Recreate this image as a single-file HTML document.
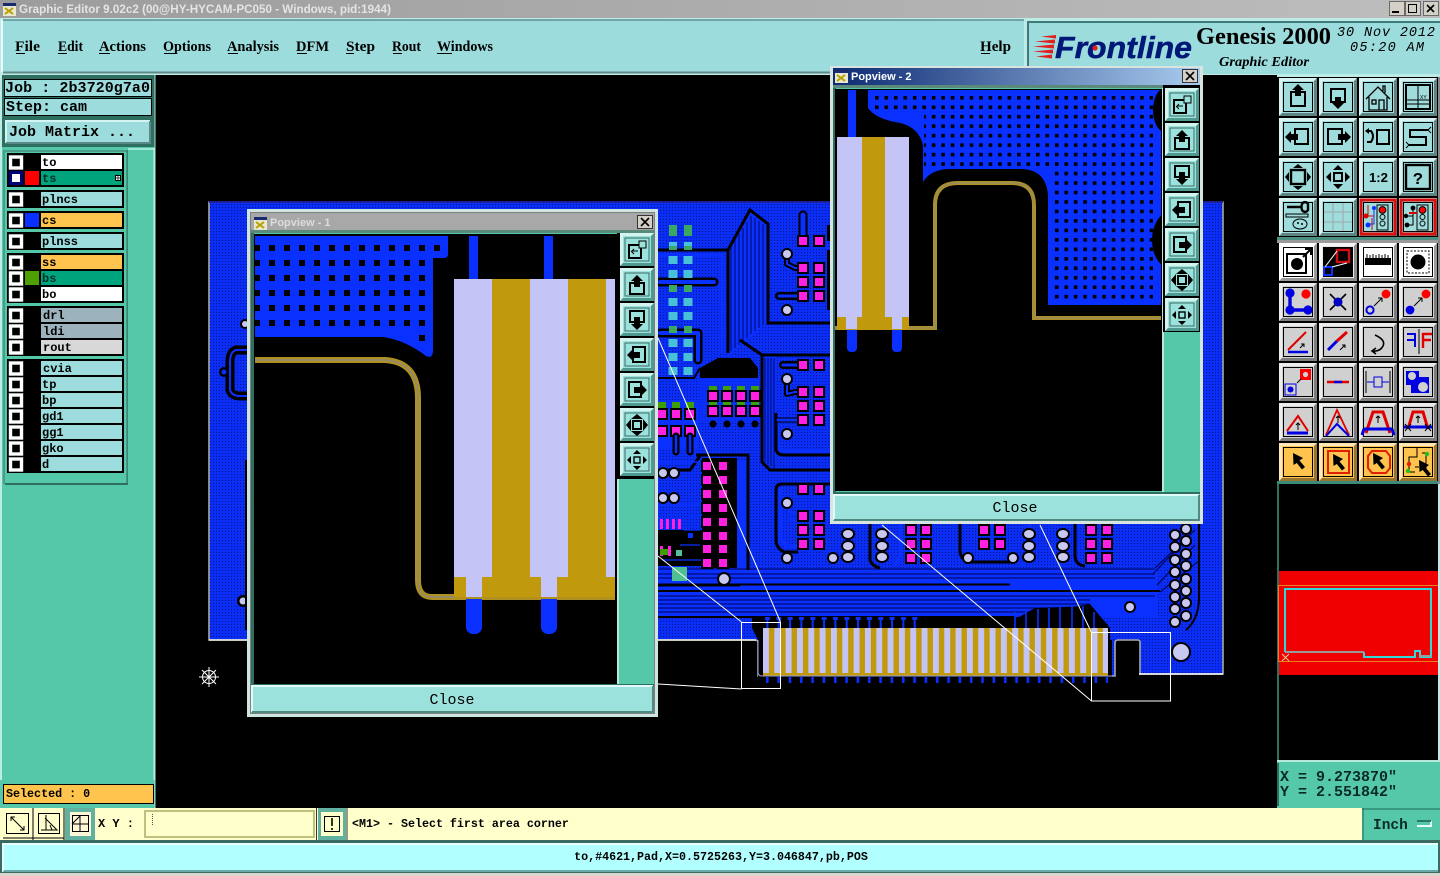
<!DOCTYPE html>
<html><head><meta charset="utf-8"><title>Graphic Editor</title>
<style>
html,body{margin:0;padding:0;background:#000;width:1440px;height:876px;overflow:hidden}
svg{display:block;position:absolute;left:0;top:0}
.mo{font-family:"Liberation Mono",monospace;font-weight:700}
.mn{font-family:"Liberation Mono",monospace}
.se{font-family:"Liberation Serif",serif;font-weight:700}
.sa{font-family:"Liberation Sans",sans-serif}
.ly{font-family:"Liberation Mono",monospace;font-weight:700;font-size:12px;fill:#000}
.k{fill:none;stroke:#000;stroke-linecap:round;stroke-linejoin:round}
.u{fill:none;stroke:#0a30ff;stroke-linecap:round;stroke-linejoin:round}
.dk{fill:none;stroke:#04107a;stroke-width:1.2}
.ic{fill:none;stroke:#000;stroke-width:2}
</style></head><body>
<svg width="1440" height="876" viewBox="0 0 1440 876" xmlns="http://www.w3.org/2000/svg">
<defs>
<pattern id="dots" width="3" height="3" patternUnits="userSpaceOnUse"><rect width="3" height="3" fill="#0b2ef6"/><rect width="1" height="1" fill="#061690"/></pattern>
<pattern id="pd1" x="249.5" y="240.5" width="15" height="15" patternUnits="userSpaceOnUse"><rect x="4.5" y="4.5" width="6" height="6" fill="#000"/></pattern>
<pattern id="pd2" x="872" y="93" width="9.47" height="9.47" patternUnits="userSpaceOnUse"><rect x="3" y="3" width="3.6" height="3.6" fill="#000"/></pattern>
<pattern id="conn" x="763" y="628" width="11.33" height="48" patternUnits="userSpaceOnUse"><rect width="11.33" height="48" fill="#c09a0c"/><rect width="5.9" height="45" fill="#c4c4f6"/></pattern>
<pattern id="fing" x="763" y="617" width="11.33" height="12" patternUnits="userSpaceOnUse"><rect x="3.4" y="3" width="2" height="9" fill="#0a30ff"/><rect x="2" y="0" width="5" height="3" fill="#0a30ff"/></pattern>
<pattern id="fing2" x="763" y="677" width="11.33" height="7" patternUnits="userSpaceOnUse"><rect x="3" y="0" width="2.6" height="6" fill="#0a30ff"/></pattern>
<linearGradient id="tb" x1="0" x2="1" y1="0" y2="0"><stop offset="0" stop-color="#9c9c9c"/><stop offset="1" stop-color="#bdbdbd"/></linearGradient>
<linearGradient id="tb2" x1="0" x2="1" y1="0" y2="0"><stop offset="0" stop-color="#0d2a72"/><stop offset="1" stop-color="#a8cbee"/></linearGradient>
<clipPath id="c1"><rect x="254" y="235" width="361" height="448"/></clipPath>
<clipPath id="c2"><rect x="835" y="90" width="326" height="400"/></clipPath>
<g id="p"><rect x="-6" y="-6" width="12" height="12" fill="#000"/><rect x="-4" y="-4" width="8" height="8" fill="#ff20e0"/></g>
<g id="v"><circle r="6" fill="#000"/><circle r="4" fill="#c8c8f0"/></g>
<g id="w"><ellipse rx="7" ry="6" fill="#000"/><ellipse rx="5" ry="4" fill="#c8c8f0"/></g>
<g id="tp"><rect x="-4.5" y="-4" width="9" height="8" fill="#48c0d8"/></g>
<!-- bevel buttons -->
<g id="bt"><rect width="38" height="38" fill="currentColor"/><path d="M0,0H38L35,3H3V35L0,38Z" fill="#fff" opacity=".6"/><path d="M38,38H0L3,35H35V3L38,0Z" fill="#000" opacity=".4"/><rect x="4.5" y="4.5" width="29" height="29" fill="none" stroke="#000"/></g>
<g id="pb"><rect width="34" height="33" fill="#9ce2dc"/><path d="M0,0H34L31,3H3V30L0,33Z" fill="#d4f4f0"/><path d="M34,33H0L3,30H31V3L34,0Z" fill="#4e9a90"/><rect x="5" y="5" width="24" height="23" fill="none" stroke="#3a6a64"/></g>
</defs>

<!-- canvas -->
<rect width="1440" height="876" fill="#000"/>

<!-- BOARD -->
<path d="M209,202H1223V674H1140V642Q1140,640 1137,640H1118Q1115,640 1115,643V676H758V643Q758,640 755,640H209Z" fill="url(#dots)" stroke="#a8a8a8" stroke-width="1.6"/>
<path d="M209,640H756" stroke="#f4f4e0" stroke-width="1.4"/>
<path d="M1139,674H1223" stroke="#fff" stroke-width="1.4"/>
<path d="M209,202H1223" stroke="#0a0a90" stroke-width="1.4"/>
<!-- left strip features -->
<path d="M247,350H236Q230,352 230,362V390Q232,396 240,396H247" fill="none" stroke="#000" stroke-width="9"/>
<path d="M247,350H236Q230,352 230,362V390Q232,396 240,396H247" fill="none" stroke="#0a30ff" stroke-width="2"/>
<circle cx="224" cy="372" r="5" fill="#000"/><circle cx="224" cy="372" r="2.5" fill="#0a30ff"/>
<circle cx="245" cy="324" r="5" fill="#000"/><circle cx="245" cy="324" r="3" fill="#c8c8f0"/>
<circle cx="243" cy="601" r="6" fill="#000"/><circle cx="243" cy="601" r="3.5" fill="#c8c8f0"/>
<rect x="245" y="460" width="3" height="170" fill="#000"/>
<!-- horizontal bundles -->
<rect x="658" y="568" width="500" height="50" fill="#0a30ff"/>
<path d="M658,569H1155M658,574H1155M658,578H1155M658,596H1155M658,600H1090M658,604H1090M658,608H1070M658,612H1050" stroke="#030a70" stroke-width="1.3"/>
<path d="M658,585H1010" stroke="#000" stroke-width="3"/>
<path d="M740,586H1010" stroke="#0a30ff" stroke-width="1"/>
<path d="M658,591H1160M658,617H1015" stroke="#000" stroke-width="2"/>
<path d="M1155,568L1195,530M1152,575L1190,535M1160,592L1200,560M1157,585L1195,545" stroke="#020a70" stroke-width="1.4"/>
<!-- connector -->
<path d="M752,618H1012L1090,604L1110,628V640H1112V680H758V640L752,628Z" fill="#000"/>
<path d="M1014,620L1035,608L1090,606L1108,625" fill="#000"/>
<path d="M1015,628V612M1026,628V610M1038,628V609M1049,628V608M1060,628V607M1072,628V606M1083,628V606M1094,628V612" stroke="#0a30ff" stroke-width="1.6"/>
<rect x="763" y="617" width="155" height="11" fill="url(#fing)"/>
<rect x="763" y="628" width="345" height="48" fill="url(#conn)"/>
<rect x="763" y="673" width="345" height="3" fill="#c09a0c"/>
<path d="M758,640V672Q758,676 762,676H1115" fill="none" stroke="#9aa0e0" stroke-width="1"/>
<rect x="763" y="677" width="345" height="7" fill="url(#fing2)"/>

<!-- diagonal bundle A -->
<path d="M728,250L750,212L767,224V323L728,356Z" fill="#0a30ff"/>
<path d="M731,246V351M735,240V348M739,234V345M743,228V341M747,222V338M751,216V334M755,218V331M759,221V328M763,224V325" class="dk"/>
<path d="M728,250L750,210L768,224V323H830" fill="none" stroke="#000" stroke-width="3"/>
<path d="M658,250H728V353" fill="none" stroke="#000" stroke-width="3"/>
<rect x="762" y="356" width="14" height="108" fill="#0a30ff"/>
<path d="M765,358V462M768,358V464M771,358V466M774,358V468" class="dk"/>
<path d="M740,340L762,355H830M762,355V462L770,470H830" fill="none" stroke="#000" stroke-width="3"/>
<path d="M776,413V448Q776,455 784,455H830" fill="none" stroke="#000" stroke-width="3"/>
<path d="M779,413V446Q779,451 786,451H830" fill="none" stroke="#0a30ff" stroke-width="2.5"/>
<path d="M658,255H722V352" fill="none" stroke="#0a30ff" stroke-width="3"/>
<!-- bars -->
<path class="k" stroke-width="9" d="M660,282H714"/><path class="u" stroke-width="4" d="M660,282H714"/>
<path class="k" stroke-width="9" d="M660,333H698V360"/><path class="u" stroke-width="4" d="M660,333H698V360"/>
<path class="k" stroke-width="9" d="M803,215V240"/><path class="u" stroke-width="5" d="M803,215V240"/>
<path class="k" stroke-width="8" d="M779,296H802"/><path class="u" stroke-width="3" d="M779,296H802"/>
<path class="k" stroke-width="8" d="M783,365H802"/><path class="u" stroke-width="3" d="M783,365H802"/>
<path class="k" stroke-width="6" d="M787,254V264L795,268H803"/><path class="u" stroke-width="2" d="M787,254V264L795,268H803"/>
<path class="k" stroke-width="6" d="M787,385V394L795,392H803"/><path class="u" stroke-width="2" d="M787,385V394L795,392H803"/>
<path class="k" stroke-width="5" d="M778,420H803"/><path class="u" stroke-width="3" d="M778,420H803"/>
<rect x="827" y="225" width="3" height="16" fill="#000"/><rect x="827" y="250" width="3" height="60" fill="#000"/>
<!-- top IC row -->
<path d="M700,368L718,358H750L758,368V378H700Z" fill="#000"/>
<rect x="698" y="378" width="62" height="44" fill="#0a30ff" opacity=".6"/>
<path d="M658,378H694L700,368" fill="none" stroke="#000" stroke-width="2"/>
<rect x="658" y="400" width="40" height="50" fill="#0a30ff"/>
<g fill="#3ea000"><rect x="709" y="386" width="8" height="7"/><rect x="723" y="386" width="8" height="7"/><rect x="737" y="386" width="8" height="7"/><rect x="751" y="386" width="8" height="7"/><rect x="709" y="401" width="8" height="6"/><rect x="723" y="401" width="8" height="6"/><rect x="737" y="401" width="8" height="6"/><rect x="751" y="401" width="8" height="6"/><rect x="658" y="402" width="8" height="7"/><rect x="672" y="402" width="8" height="7"/><rect x="686" y="402" width="8" height="7"/></g>
<g><use href="#p" x="713" y="396"/><use href="#p" x="727" y="396"/><use href="#p" x="741" y="396"/><use href="#p" x="755" y="396"/><use href="#p" x="713" y="411"/><use href="#p" x="727" y="411"/><use href="#p" x="741" y="411"/><use href="#p" x="755" y="411"/><use href="#p" x="662" y="414"/><use href="#p" x="676" y="414"/><use href="#p" x="690" y="414"/><use href="#p" x="662" y="431"/><use href="#p" x="676" y="431"/><use href="#p" x="690" y="431"/></g>
<path d="M676,436V452M690,436V452" class="k" stroke-width="7"/><path d="M676,436V452M690,436V452" class="u" stroke-width="2.5"/>
<g fill="#000"><circle cx="713" cy="424" r="3.6"/><circle cx="727" cy="424" r="3.6"/><circle cx="741" cy="424" r="3.6"/><circle cx="755" cy="424" r="3.6"/></g>
<!-- teal column pads -->
<g fill="#3aa860"><rect x="669" y="225" width="8" height="11"/><rect x="684" y="225" width="8" height="11"/><rect x="669" y="243" width="8" height="7"/><rect x="684" y="243" width="8" height="7"/><rect x="669" y="285" width="8" height="7"/><rect x="684" y="285" width="8" height="7"/><rect x="669" y="326" width="8" height="7"/><rect x="684" y="326" width="8" height="7"/></g>
<g><use href="#tp" x="673" y="260"/><use href="#tp" x="688" y="260"/><use href="#tp" x="673" y="274"/><use href="#tp" x="688" y="274"/><use href="#tp" x="673" y="302"/><use href="#tp" x="688" y="302"/><use href="#tp" x="673" y="316"/><use href="#tp" x="688" y="316"/><use href="#tp" x="673" y="343"/><use href="#tp" x="688" y="343"/><use href="#tp" x="673" y="357"/><use href="#tp" x="688" y="357"/><use href="#tp" x="673" y="371"/><use href="#tp" x="688" y="371"/></g>
<rect x="669" y="242" width="8" height="4" fill="#48c0d8"/><rect x="684" y="242" width="8" height="4" fill="#48c0d8"/>
<!-- central block -->
<rect x="702" y="458" width="35" height="110" fill="#000"/>
<rect x="658" y="530" width="46" height="36" fill="#000"/>
<path d="M696,455H748V570" fill="none" stroke="#000" stroke-width="3"/>
<path d="M741,460V568" stroke="#0a30ff" stroke-width="8"/>
<path d="M700,456L690,470L660,470" fill="none" stroke="#000" stroke-width="3"/>
<path d="M658,462H702M658,505H703" stroke="#0a30ff" stroke-width="1.6"/>
<path d="M662,560H702M690,516H700M684,530H700M680,545H700" stroke="#0a30ff" stroke-width="1.2"/>
<rect x="688" y="533" width="5" height="5" fill="#0a30ff"/>
<g><use href="#p" x="707" y="466"/><use href="#p" x="723" y="466"/><use href="#p" x="707" y="480"/><use href="#p" x="723" y="480"/><use href="#p" x="707" y="494"/><use href="#p" x="723" y="494"/><use href="#p" x="707" y="508"/><use href="#p" x="723" y="508"/><use href="#p" x="707" y="522"/><use href="#p" x="723" y="522"/><use href="#p" x="707" y="536"/><use href="#p" x="723" y="536"/><use href="#p" x="707" y="549"/><use href="#p" x="723" y="549"/><use href="#p" x="707" y="563"/><use href="#p" x="723" y="563"/></g>
<g fill="#ff20e0"><rect x="660" y="519" width="3" height="10"/><rect x="666" y="519" width="3" height="10"/><rect x="672" y="519" width="3" height="10"/><rect x="678" y="519" width="3" height="10"/></g>
<g fill="#ff20e0"><rect x="660" y="546" width="3" height="10"/><rect x="668" y="546" width="3" height="10"/></g>
<rect x="660" y="549" width="8" height="6" fill="#3ea000"/><rect x="676" y="550" width="6" height="6" fill="#50c0a0"/>
<rect x="672" y="567" width="15" height="14" fill="#50c090"/>
<g><use href="#v" x="663" y="473"/><use href="#v" x="674" y="473"/><use href="#v" x="663" y="498"/><use href="#v" x="674" y="498"/></g>
<circle cx="724" cy="579" r="6" fill="#c8c8f0" stroke="#000" stroke-width="2"/>
<!-- pad blocks right -->
<path d="M830,484H782Q776,484 776,490V540Q776,548 784,552H798" fill="none" stroke="#000" stroke-width="3"/>
<path d="M781,488V538Q782,545 790,546H800" fill="none" stroke="#0a30ff" stroke-width="4"/>
<path d="M787,503L790,513H800M787,520H800" fill="none" stroke="#0a30ff" stroke-width="1.5"/>
<g><use href="#p" x="803" y="241"/><use href="#p" x="819" y="241"/><use href="#p" x="803" y="268"/><use href="#p" x="819" y="268"/><use href="#p" x="803" y="282"/><use href="#p" x="819" y="282"/><use href="#p" x="803" y="296"/><use href="#p" x="819" y="296"/><use href="#p" x="803" y="365"/><use href="#p" x="819" y="365"/><use href="#p" x="803" y="392"/><use href="#p" x="819" y="392"/><use href="#p" x="803" y="406"/><use href="#p" x="819" y="406"/><use href="#p" x="803" y="420"/><use href="#p" x="819" y="420"/><use href="#p" x="803" y="489"/><use href="#p" x="819" y="489"/><use href="#p" x="803" y="516"/><use href="#p" x="819" y="516"/><use href="#p" x="803" y="530"/><use href="#p" x="819" y="530"/><use href="#p" x="803" y="544"/><use href="#p" x="819" y="544"/></g>
<g><use href="#v" x="787" y="254"/><use href="#v" x="787" y="310"/><use href="#v" x="787" y="379"/><use href="#v" x="787" y="434"/><use href="#v" x="787" y="503"/><use href="#v" x="787" y="558"/></g>
<!-- below popview 2 -->
<path d="M960,524V550Q960,560 970,562H1010M870,524V560Q872,566 880,568M1075,524V555Q1075,565 1085,566" fill="none" stroke="#000" stroke-width="3"/>
<path d="M1030,524V560L1020,566M900,524V555L895,566" fill="none" stroke="#0a30ff" stroke-width="3"/>
<g><use href="#p" x="911" y="530"/><use href="#p" x="926" y="530"/><use href="#p" x="911" y="544"/><use href="#p" x="926" y="544"/><use href="#p" x="911" y="558"/><use href="#p" x="926" y="558"/><use href="#p" x="984" y="530"/><use href="#p" x="1000" y="530"/><use href="#p" x="984" y="544"/><use href="#p" x="1000" y="544"/><use href="#p" x="1091" y="530"/><use href="#p" x="1107" y="530"/><use href="#p" x="1091" y="544"/><use href="#p" x="1107" y="544"/><use href="#p" x="1091" y="558"/><use href="#p" x="1107" y="558"/></g>
<g><use href="#w" x="848" y="534"/><use href="#w" x="848" y="546"/><use href="#w" x="848" y="557"/><use href="#w" x="882" y="534"/><use href="#w" x="882" y="546"/><use href="#w" x="882" y="557"/><use href="#w" x="1029" y="534"/><use href="#w" x="1029" y="546"/><use href="#w" x="1029" y="557"/><use href="#w" x="1063" y="534"/><use href="#w" x="1063" y="546"/><use href="#w" x="1063" y="557"/><use href="#v" x="833" y="558"/><use href="#v" x="968" y="558"/><use href="#v" x="1013" y="558"/><use href="#v" x="1130" y="607"/></g>
<g><use href="#v" x="1175" y="535"/><use href="#v" x="1175" y="547"/><use href="#v" x="1175" y="560"/><use href="#v" x="1175" y="572"/><use href="#v" x="1175" y="585"/><use href="#v" x="1175" y="597"/><use href="#v" x="1175" y="609"/><use href="#v" x="1175" y="622"/><use href="#v" x="1186" y="529"/><use href="#v" x="1186" y="541"/><use href="#v" x="1186" y="554"/><use href="#v" x="1186" y="566"/><use href="#v" x="1186" y="579"/><use href="#v" x="1186" y="591"/><use href="#v" x="1186" y="603"/><use href="#v" x="1186" y="616"/></g>
<circle cx="1181" cy="652" r="10" fill="#000"/><circle cx="1181" cy="652" r="8" fill="#c8c8f0"/>
<path d="M1199,524V600Q1198,620 1186,630" fill="none" stroke="#000" stroke-width="2"/>

<!-- white link lines -->
<g fill="none" stroke="#fff" stroke-width="1">
<rect x="741.5" y="622.5" width="39" height="66"/>
<rect x="1091.5" y="632.5" width="79" height="68.5"/>
<path d="M658,338L780.5,622M658,556L741.5,622M658,684L741.5,689"/>
<path d="M882,525L1091.5,701M1040,525L1091.5,632.5M1091.5,632.5V700"/>
</g>
<!-- compass -->
<g stroke="#fff" stroke-width="1" fill="none"><circle cx="209" cy="677" r="6.5"/><path d="M199,677H219M209,667V687M202,670L216,684M216,670L202,684"/></g>

<!-- TITLE BAR -->
<rect x="0" y="0" width="1440" height="18" fill="url(#tb)"/>
<rect x="3" y="3" width="13" height="13" fill="#e8e8d0"/><rect x="3" y="3" width="13" height="3" fill="#1a2a70"/><path d="M5,8L13,14M13,8L5,14" stroke="#b8a000" stroke-width="2"/>
<text class="sa" x="19" y="13" font-size="11.5" font-weight="700" fill="#e4e4e4" textLength="372" lengthAdjust="spacingAndGlyphs">Graphic Editor 9.02c2 (00@HY-HYCAM-PC050 - Windows, pid:1944)</text>
<g fill="#d4d0c8" stroke="#444" stroke-width=".7"><rect x="1389.5" y="1.5" width="15" height="14"/><rect x="1405.5" y="1.5" width="15" height="14"/><rect x="1423.5" y="1.5" width="15" height="14"/></g>
<path d="M1392,12H1399" stroke="#000" stroke-width="2"/><rect x="1408.5" y="4.5" width="8" height="8" fill="none" stroke="#000"/><path d="M1427,5L1434,12M1434,5L1427,12" stroke="#000" stroke-width="1.6"/>

<!-- MENU BAR -->
<rect x="0" y="18" width="1440" height="57" fill="#bdece8"/>
<rect x="3" y="20" width="1021" height="53" fill="#9cdcdc"/>
<path d="M3,20H1024" stroke="#5f8f90" stroke-width="1.6"/><path d="M3,72.5H1024" stroke="#5f8a88" stroke-width="2"/>
<path d="M2,20V72" stroke="#e8fafa" stroke-width="2"/>
<rect x="1028" y="22" width="412" height="52" fill="#9cdcdc"/>
<path d="M1028,74V22H1440" fill="none" stroke="#3e7a78" stroke-width="2"/>
<g class="se" font-size="14.5" fill="#000">
<text x="15" y="51" textLength="25" lengthAdjust="spacingAndGlyphs">File</text>
<text x="58" y="51" textLength="25" lengthAdjust="spacingAndGlyphs">Edit</text>
<text x="99" y="51" textLength="47" lengthAdjust="spacingAndGlyphs">Actions</text>
<text x="163" y="51" textLength="48" lengthAdjust="spacingAndGlyphs">Options</text>
<text x="227" y="51" textLength="52" lengthAdjust="spacingAndGlyphs">Analysis</text>
<text x="296" y="51" textLength="33" lengthAdjust="spacingAndGlyphs">DFM</text>
<text x="346" y="51" textLength="29" lengthAdjust="spacingAndGlyphs">Step</text>
<text x="392" y="51" textLength="29" lengthAdjust="spacingAndGlyphs">Rout</text>
<text x="437" y="51" textLength="56" lengthAdjust="spacingAndGlyphs">Windows</text>
<text x="980" y="51" textLength="31" lengthAdjust="spacingAndGlyphs">Help</text>
</g>
<path d="M16,53.5H25M58,53.5H67M99,53.5H110M164,53.5H175M228,53.5H238M297,53.5H307M346,53.5H354M393,53.5H402M437,53.5H452M981,53.5H990" stroke="#000" stroke-width="1"/>

<!-- LOGO -->
<g fill="#e02020"><path d="M1041,36.500L1056,35V38.500Z"/><path d="M1035,41.500L1055,39.500V43.500Z"/><path d="M1033,46.500L1054,44.500V48.500Z"/><path d="M1033,51.500L1053,49.500V53.500Z"/><path d="M1036,56.500L1052,54.500V58.500Z"/></g>
<text class="sa" x="1055" y="58" font-size="31" font-weight="700" font-style="italic" fill="#001878" stroke="#001878" stroke-width=".5" textLength="137" lengthAdjust="spacingAndGlyphs">Frontline</text>
<circle cx="1095" cy="48" r="2.6" fill="#e02020"/>
<text x="1196" y="44" font-family="'Liberation Serif',serif" font-weight="700" font-size="24" fill="#000" textLength="135" lengthAdjust="spacingAndGlyphs">Genesis 2000</text>
<text class="mn" x="1337" y="36" font-size="13.5" font-style="italic" fill="#000" textLength="98" lengthAdjust="spacing">30 Nov 2012</text>
<text class="mn" x="1350" y="51" font-size="13.5" font-style="italic" fill="#000" textLength="74" lengthAdjust="spacing">05:20 AM</text>
<text class="se" x="1219" y="66" font-size="14" font-style="italic" fill="#000" textLength="90" lengthAdjust="spacingAndGlyphs">Graphic Editor</text>

<!-- LEFT PANEL -->
<rect x="0" y="75" width="155" height="733" fill="#55c8aa"/>
<rect x="0" y="75" width="2" height="733" fill="#bdece8"/>
<rect x="2" y="75" width="153" height="72" fill="#2f6f60"/>
<rect x="4" y="79" width="148" height="18" fill="#000"/><rect x="5" y="80" width="146" height="16" fill="#9cdcdc"/>
<rect x="4" y="98" width="148" height="18" fill="#000"/><rect x="5" y="99" width="146" height="16" fill="#9cdcdc"/>
<text class="mn" x="5" y="92" font-size="15" font-weight="700" fill="#000" textLength="145" lengthAdjust="spacing">Job : 2b3720g7a0</text>
<text class="mn" x="6" y="111" font-size="15" font-weight="700" fill="#000">Step: cam</text>
<rect x="3" y="118" width="151" height="28" fill="#2f6f60"/>
<rect x="6" y="121" width="144" height="22" fill="#9cdcdc"/>
<path d="M6,143V121H150" fill="none" stroke="#d4f4f4" stroke-width="2"/><path d="M150,121V143H6" fill="none" stroke="#5a8a88" stroke-width="2"/>
<text class="mn" x="9" y="136" font-size="15" font-weight="700" fill="#000">Job Matrix ...</text>

<rect x="128" y="148" width="26" height="340" fill="#55c8aa"/><path d="M128,149H154" stroke="#9ce8d8" stroke-width="2"/><path d="M154,148V780" stroke="#c0f0e6"/>
<rect x="3" y="150" width="125" height="334" fill="#4a9e88"/>
<rect x="5" y="152" width="122" height="331" fill="#55c8aa"/>
<path d="M5,484H128" stroke="#2f6f60" stroke-width="2"/>
<path d="M127,150V484" stroke="#2f6f60" stroke-width="1"/>
<!-- groups -->
<g fill="#000"><rect x="7" y="153" width="117" height="34"/><rect x="7" y="190" width="117" height="18"/><rect x="7" y="211" width="117" height="18"/><rect x="7" y="232" width="117" height="18"/><rect x="7" y="253" width="117" height="50"/><rect x="7" y="306" width="117" height="50"/><rect x="7" y="359" width="117" height="114"/></g>
<g fill="#9cdcdc"><rect x="41" y="192" width="81" height="14"/><rect x="41" y="234" width="81" height="14"/><rect x="41" y="361" width="81" height="14"/><rect x="41" y="377" width="81" height="14"/><rect x="41" y="393" width="81" height="14"/><rect x="41" y="409" width="81" height="14"/><rect x="41" y="425" width="81" height="14"/><rect x="41" y="441" width="81" height="14"/><rect x="41" y="457" width="81" height="14"/></g>
<rect x="41" y="155" width="81" height="14" fill="#fff"/><rect x="41" y="171" width="81" height="14" fill="#00a47c"/>
<rect x="41" y="213" width="81" height="14" fill="#ffc44e"/><rect x="41" y="255" width="81" height="14" fill="#ffc44e"/><rect x="41" y="271" width="81" height="14" fill="#00a47c"/><rect x="41" y="287" width="81" height="14" fill="#fff"/>
<rect x="41" y="308" width="81" height="14" fill="#9cb2bc"/><rect x="41" y="324" width="81" height="14" fill="#9cb2bc"/><rect x="41" y="340" width="81" height="14" fill="#d8d8d8"/>
<rect x="25" y="171" width="14" height="14" fill="#ff0000"/><rect x="25" y="213" width="14" height="14" fill="#0a30ff"/><rect x="25" y="271" width="14" height="14" fill="#4ea000"/>
<!-- toggles -->
<g fill="none" stroke="#fff" stroke-width="3.4">
<rect x="10.5" y="157" width="11" height="11"/><rect x="10.5" y="194" width="11" height="11"/><rect x="10.5" y="215" width="11" height="11"/><rect x="10.5" y="236" width="11" height="11"/><rect x="10.5" y="257" width="11" height="11"/><rect x="10.5" y="273" width="11" height="11"/><rect x="10.5" y="289" width="11" height="11"/><rect x="10.5" y="310" width="11" height="11"/><rect x="10.5" y="326" width="11" height="11"/><rect x="10.5" y="342" width="11" height="11"/><rect x="10.5" y="363" width="11" height="11"/><rect x="10.5" y="379" width="11" height="11"/><rect x="10.5" y="395" width="11" height="11"/><rect x="10.5" y="411" width="11" height="11"/><rect x="10.5" y="427" width="11" height="11"/><rect x="10.5" y="443" width="11" height="11"/><rect x="10.5" y="459" width="11" height="11"/>
</g>
<rect x="9" y="171" width="14" height="14" fill="#00007a"/><rect x="12" y="174" width="8" height="8" fill="#fff"/>
<rect x="115.5" y="175.5" width="5" height="5" fill="#fff" stroke="#000"/><path d="M118,175V181M115,178H121" stroke="#000" stroke-width=".7"/>
<g class="ly">
<text x="42" y="166">to</text><text x="42" y="182" style="fill:#01302a">ts</text><text x="42" y="203">plncs</text><text x="42" y="224">cs</text><text x="42" y="245">plnss</text>
<text x="42" y="266">ss</text><text x="42" y="282" style="fill:#01302a">bs</text><text x="42" y="298">bo</text>
<text x="43" y="319">drl</text><text x="43" y="335">ldi</text><text x="43" y="351">rout</text>
<text x="43" y="372">cvia</text><text x="42" y="388">tp</text><text x="42" y="404">bp</text><text x="42" y="420">gd1</text><text x="42" y="436">gg1</text><text x="42" y="452">gko</text><text x="42" y="468">d</text>
</g>
<!-- selected -->
<rect x="0" y="780" width="155" height="28" fill="#55c8aa"/>
<rect x="3" y="784" width="151" height="20" fill="#000"/><rect x="4" y="785" width="149" height="18" fill="#ffc44e"/>
<text class="mo" x="6" y="797" font-size="11.7" fill="#000">Selected : 0</text>
<path d="M155,75V808" stroke="#a8e8dc" stroke-width="1"/>

<!-- RIGHT TOOLBOX -->
<rect x="1277" y="74" width="163" height="411" fill="#000"/>
<rect x="1277" y="74" width="163" height="3" fill="#bdece8"/>
<rect x="1277" y="237" width="163" height="3" fill="#4a8f80"/><rect x="1277" y="240" width="163" height="3" fill="#9a9a9a"/>
<rect x="1277" y="481" width="163" height="3" fill="#3e8a78"/>
<rect x="1438" y="77" width="2" height="408" fill="#888"/>
<g color="#a0dcdc">
<use href="#bt" x="1279" y="78"/><use href="#bt" x="1319" y="78"/><use href="#bt" x="1359" y="78"/><use href="#bt" x="1399" y="78"/>
<use href="#bt" x="1279" y="118"/><use href="#bt" x="1319" y="118"/><use href="#bt" x="1359" y="118"/><use href="#bt" x="1399" y="118"/>
<use href="#bt" x="1279" y="158"/><use href="#bt" x="1319" y="158"/><use href="#bt" x="1359" y="158"/><use href="#bt" x="1399" y="158"/>
<use href="#bt" x="1279" y="198"/><use href="#bt" x="1319" y="198"/><use href="#bt" x="1359" y="198"/><use href="#bt" x="1399" y="198"/>
</g>
<g color="#fff"><use href="#bt" x="1279" y="243"/><use href="#bt" x="1359" y="243"/><use href="#bt" x="1399" y="243"/></g>
<g color="#e8e8e8"><use href="#bt" x="1319" y="243"/></g><rect x="1323" y="247" width="30" height="30" fill="#000"/>
<g color="#d0d0d0">
<use href="#bt" x="1279" y="283"/><use href="#bt" x="1319" y="283"/><use href="#bt" x="1359" y="283"/><use href="#bt" x="1399" y="283"/>
<use href="#bt" x="1279" y="323"/><use href="#bt" x="1319" y="323"/><use href="#bt" x="1359" y="323"/><use href="#bt" x="1399" y="323"/>
<use href="#bt" x="1279" y="363"/><use href="#bt" x="1319" y="363"/><use href="#bt" x="1359" y="363"/><use href="#bt" x="1399" y="363"/>
<use href="#bt" x="1279" y="403"/><use href="#bt" x="1319" y="403"/><use href="#bt" x="1359" y="403"/><use href="#bt" x="1399" y="403"/>
</g>
<g color="#ffc44e"><use href="#bt" x="1279" y="443"/><use href="#bt" x="1319" y="443"/><use href="#bt" x="1359" y="443"/><use href="#bt" x="1399" y="443"/></g>
<!-- teal icons row 1 -->
<g transform="translate(1279,78)"><rect x="12" y="14" width="14" height="14" class="ic"/><path d="M19,6L25,12H22V18H16V12H13Z"/></g>
<g transform="translate(1319,78)"><rect x="12" y="11" width="14" height="13" class="ic"/><path d="M19,31L13,25H16V19H22V25H25Z"/></g>
<g transform="translate(1359,78)" class="ic" style="stroke-width:1.3"><path d="M7,21L19,9L31,21M10,19V32H28V19M24,13V8H26V15"/><rect x="13" y="22" width="4" height="4"/><path d="M20,32V22H25V32"/></g>
<g transform="translate(1399,78)"><rect x="7" y="7" width="24" height="24" class="ic"/><path d="M7,22H31M19,7V31M7,26H31" stroke="#000" stroke-width="1" fill="none"/><text x="21" y="21" font-size="5" font-family="Liberation Sans" fill="#000">XY</text></g>
<!-- row 2 -->
<g transform="translate(1279,118)"><rect x="16" y="11" width="13" height="15" class="ic"/><path d="M6,19L12,13V16H19V22H12V25Z"/></g>
<g transform="translate(1319,118)"><rect x="9" y="11" width="14" height="15" class="ic"/><path d="M32,19L26,13V16H19V22H26V25Z"/></g>
<g transform="translate(1359,118)"><rect x="18" y="12" width="12" height="14" class="ic"/><path d="M7,13H12Q16,18 12,24H8" class="ic"/><path d="M10,10V16L6,13Z"/></g>
<g transform="translate(1399,118)"><path d="M10,27H27V19H11V12H29" class="ic"/><path d="M7,24L10,27L7,30M32,9L29,12L32,15" fill="none" stroke="#000"/></g>
<!-- row 3 -->
<g transform="translate(1279,158)"><rect x="12" y="12" width="14" height="14" class="ic" style="stroke-width:2.4"/><path d="M19,6L24,10H14ZM19,32L24,28H14ZM6,19L10,14V24ZM32,19L28,14V24Z"/></g>
<g transform="translate(1319,158)"><rect x="15" y="15" width="8" height="8" class="ic"/><path d="M19,7L24,12H14ZM19,31L24,26H14ZM7,19L12,14V24ZM31,19L26,14V24Z"/></g>
<text x="1369" y="182" class="sa" font-weight="700" font-size="13" fill="#000" textLength="19" lengthAdjust="spacingAndGlyphs">1:2</text>
<g transform="translate(1399,158)"><rect x="7" y="7" width="24" height="24" class="ic" style="stroke-width:2.4"/><text x="19" y="26" text-anchor="middle" class="mo" font-size="17" fill="#000">?</text></g>
<!-- row 4 -->
<g transform="translate(1279,198)"><path d="M8,9H22M23,9A3,3,0,0,1,29,6V12A3,3,0,0,1,23,9" stroke="#000" stroke-width="2.4" fill="none"/><path d="M7,16H29V19H7Z" fill="none" stroke="#000"/><ellipse cx="21" cy="26" rx="7" ry="5" fill="none" stroke="#000"/><circle cx="19" cy="25" r="1" fill="#000"/><circle cx="23" cy="26" r="1" fill="#000"/></g>
<g transform="translate(1319,198)" stroke="#9aa8a8" fill="none"><path d="M5,14H33M5,24H33M14,5V33M24,5V33"/></g>
<g fill="none" stroke="#d81010" stroke-width="3"><rect x="1361" y="200" width="34" height="34"/><rect x="1401" y="200" width="34" height="34"/></g>
<g transform="translate(1359,198)"><rect x="18" y="7" width="11" height="25" fill="#a0dcdc" stroke="#000"/><circle cx="23.5" cy="12" r="3.4" fill="#f00" stroke="#000"/><circle cx="23.5" cy="19" r="2.5" fill="none" stroke="#000"/><circle cx="23.5" cy="25.5" r="2.5" fill="none" stroke="#000"/><circle cx="15" cy="10" r="2" fill="#0a30ff"/><circle cx="7" cy="18" r="2.5" fill="#d00"/><circle cx="9" cy="27" r="2.5" fill="#0a30ff"/><path d="M15,10V26H9" stroke="#0a30ff" fill="none"/><path d="M7,18H15M9,7V18M13,20V32" stroke="#d00" fill="none"/></g>
<g transform="translate(1399,198)"><rect x="18" y="7" width="11" height="25" fill="#a0dcdc" stroke="#000"/><circle cx="23.5" cy="12" r="3.4" fill="#f00" stroke="#000"/><circle cx="23.5" cy="19" r="2.5" fill="none" stroke="#000"/><circle cx="23.5" cy="25.5" r="2.5" fill="none" stroke="#000"/><circle cx="14" cy="10" r="2.4"/><circle cx="7" cy="18" r="2.2"/><circle cx="8" cy="27" r="2.4"/><path d="M14,10V27H8M7,18H14" stroke="#000" fill="none"/><path d="M10,15H18" stroke="#d00" stroke-width="2"/></g>
<!-- white row -->
<g transform="translate(1279,243)"><rect x="8" y="11" width="19" height="19" class="ic"/><circle cx="18" cy="21" r="6"/><path d="M24,14L32,6M26,6H32V12" class="ic"/></g>
<g transform="translate(1319,243)"><rect x="18" y="7" width="12" height="12" fill="none" stroke="#d01010" stroke-width="2.4"/><rect x="5" y="24" width="8" height="8" fill="none" stroke="#0a30ff" stroke-width="2"/><path d="M13,24L28,20M6,24L18,8" stroke="#fff" fill="none"/></g>
<g transform="translate(1359,243)"><rect x="6" y="15" width="26" height="7"/><path d="M8,15V11M11,15V12M14,15V11M17,15V12M20,15V11M23,15V12M26,15V11M29,15V12" stroke="#000"/></g>
<g transform="translate(1399,243)"><rect x="8" y="8" width="22" height="22" fill="none" stroke="#000" stroke-dasharray="2 1.5"/><circle cx="19" cy="19" r="7.5"/></g>
<!-- gray rows -->
<g transform="translate(1279,283)"><path d="M11,10V27H30M11,27" stroke="#0000e0" stroke-width="3.4" fill="none"/><circle cx="11" cy="10" r="4.6" fill="#0000e0"/><circle cx="11" cy="27" r="4.6" fill="#0000e0"/><circle cx="29" cy="27" r="4.6" fill="#0000e0"/><circle cx="27" cy="11" r="4.6" fill="#f00"/></g>
<g transform="translate(1319,283)"><path d="M11,11L27,27M27,11L11,27" stroke="#000" stroke-width="1.6"/><circle cx="19" cy="19" r="4.5" fill="#0000c0"/></g>
<g transform="translate(1359,283)"><circle cx="11" cy="27" r="3.6" fill="none" stroke="#0000e0" stroke-width="2"/><circle cx="27" cy="11" r="4.4" fill="#f00"/><path d="M15,23L23,15M19,15H23V19" fill="none" stroke="#000"/></g>
<g transform="translate(1399,283)"><circle cx="11" cy="27" r="4.4" fill="#0000e0"/><circle cx="27" cy="11" r="4.4" fill="#f00"/><path d="M15,23L23,15M19,15H23V19" fill="none" stroke="#000"/></g>
<g transform="translate(1279,323)"><path d="M9,27L27,9" stroke="#e00000" stroke-width="2"/><path d="M9,29H29" stroke="#0000e0" stroke-width="2.4"/><path d="M21,25L25,21M22,21H25V24" stroke="#000" fill="none"/></g>
<g transform="translate(1319,323)"><path d="M9,27L18,18" stroke="#0000e0" stroke-width="3"/><path d="M18,18L28,9" stroke="#e00000" stroke-width="3"/><path d="M21,27L26,22M23,22H26V25" stroke="#000" fill="none"/></g>
<path d="M1375,335Q1386,340 1383,346Q1380,352 1372,351M1376,348L1372,351L1376,354" fill="none" stroke="#000" stroke-width="1.6"/>
<g transform="translate(1399,323)"><path d="M20,6V31" stroke="#000"/><path d="M8,11H16V24M8,17H16" stroke="#0000e0" stroke-width="2" fill="none"/><path d="M33,11H24V25M24,17H32" stroke="#e00000" stroke-width="2.4" fill="none"/></g>
<g transform="translate(1279,363)"><rect x="21" y="6" width="11" height="11" fill="#f00"/><circle cx="26.500" cy="11.500" r="2.6" fill="#d0d0d0"/><rect x="6" y="21" width="11" height="11" fill="none" stroke="#0000e0"/><circle cx="11.500" cy="26.500" r="3" fill="#0000e0"/><path d="M18,20L22,16" stroke="#000"/></g>
<g transform="translate(1319,363)"><path d="M8,19H30" stroke="#e00000" stroke-width="2.4"/><path d="M15,19H23" stroke="#0000e0" stroke-width="2.4"/></g>
<g transform="translate(1359,363)"><path d="M7,8V30M31,8V30" stroke="#000"/><path d="M8,19H30" stroke="#0000e0"/><rect x="15" y="14" width="8" height="10" fill="#d0d0d0" stroke="#0000e0"/></g>
<g transform="translate(1399,363)"><path d="M7,8H20V14H30V30H12V22H7Z" fill="#0000e0"/><circle cx="13" cy="13" r="4" fill="#d0d0d0"/><circle cx="24" cy="24" r="5" fill="#d0d0d0"/></g>
<g transform="translate(1279,403)" fill="none"><path d="M8,28L19,13L29,28" stroke="#e00000" stroke-width="2"/><path d="M8,30H29" stroke="#0000e0" stroke-width="3"/><path d="M19,20V27M17,22L19,20L21,22" stroke="#000"/></g>
<g transform="translate(1319,403)" fill="none"><path d="M7,32L18,7L30,32" stroke="#e00000" stroke-width="1.8"/><path d="M7,33L18,21L30,33" stroke="#0000e0" stroke-width="2"/><path d="M19,13V20M17,15L19,13L21,15" stroke="#000"/></g>
<g transform="translate(1359,403)" fill="none"><path d="M7,30L14,9H24L31,30" stroke="#e00000" stroke-width="3"/><path d="M5,26H33M5,26L3,32M33,26L35,32" stroke="#0000e0" stroke-width="3"/><path d="M19,13V20M17,15L19,13L21,15" stroke="#000"/></g>
<g transform="translate(1399,403)" fill="none"><path d="M9,26L14,9H24L29,26" stroke="#e00000" stroke-width="3"/><path d="M5,24H33" stroke="#0000e0" stroke-width="3"/><path d="M6,21L12,28M12,21L6,28M26,21L32,28M32,21L26,28" stroke="#000"/><path d="M19,13V20M17,15L19,13L21,15" stroke="#000"/></g>
<!-- orange row -->
<defs><path id="cur" d="M0,0L10,5L6.500,7.500L12,14L9,16.500L3.800,10L0.500,12Z"/></defs>
<use href="#cur" x="1293" y="453" />
<g transform="translate(1319,443)"><rect x="9" y="8" width="21" height="22" fill="none" stroke="#e02000" stroke-width="2"/><use href="#cur" x="14" y="11"/></g>
<g transform="translate(1359,443)"><path d="M13,8H27L31,13V25L27,30H13L9,25V13Z" fill="none" stroke="#e02000" stroke-width="2"/><use href="#cur" x="14" y="10"/></g>
<g transform="translate(1399,443)"><path d="M10,29V14H18V5M10,29H16M23,10H27V26M16,24H20" fill="none" stroke="#000"/><circle cx="10" cy="21" r="2.2" fill="#e02000"/><circle cx="9" cy="28" r="2.2" fill="#20c020"/><circle cx="28" cy="11" r="2.2" fill="#20c020"/><use href="#cur" x="20" y="17"/></g>

<!-- minimap -->
<rect x="1277" y="484" width="2" height="278" fill="#2f6f60"/>
<rect x="1279" y="571" width="159" height="104" fill="#f00000"/>
<path d="M1278,585.500H1438M1278,661.500H1438M1278.500,585V661" stroke="#e88020" stroke-width="1" fill="none"/>
<path d="M1285,652V589H1431V657H1420V651H1415V657H1364V652" fill="none" stroke="#30d8d8" stroke-width="2"/>
<path d="M1285,652H1364M1420,656H1431" stroke="#9a9a9a" stroke-width="2"/>
<path d="M1282,654L1289,661M1289,654L1282,661" stroke="#e8d0a0"/>
<rect x="1438" y="484" width="2" height="278" fill="#bdece8"/>
<rect x="1277" y="760" width="163" height="48" fill="#55c8aa"/><path d="M1277,761H1440" stroke="#b8e8dc" stroke-width="2"/>
<path d="M1278,763V806" stroke="#2f6f60" stroke-width="2"/>
<text class="mo" x="1280" y="781" font-size="15" fill="#0a2a24">X = 9.273870"</text>
<text class="mo" x="1280" y="796" font-size="15" fill="#0a2a24">Y = 2.551842"</text>

<!-- BOTTOM BAR -->
<rect x="0" y="808" width="1440" height="32" fill="#ffffcc"/>
<g fill="none" stroke="#000"><rect x="6.500" y="813.500" width="22" height="20"/><rect x="38.500" y="813.500" width="21" height="20"/></g>
<path d="M33,808V840M64,808V840M3,838H64" stroke="#000"/>
<path d="M11,817L24,830M11,821V817H15M24,826V830H20" fill="none" stroke="#000"/>
<path d="M41,830H57L45,818M46,830V815M52,830L50,825" fill="none" stroke="#000"/>
<rect x="65" y="808" width="30" height="32" fill="#62b0a0"/><rect x="70" y="812" width="21" height="24" fill="#fff6d8"/>
<rect x="72.500" y="815.500" width="16" height="16" fill="#fff6d8" stroke="#000"/><path d="M72,824H88M80,816V832M72,824L80,816" stroke="#000" fill="none"/>
<text class="mo" x="98" y="827" font-size="12" fill="#000">X Y :</text>
<rect x="145" y="811" width="169" height="26" fill="#ffffcc" stroke="#c0c080" stroke-width="2"/>
<path d="M152.500,814V826" stroke="#555" stroke-dasharray="1 1"/>
<rect x="318" y="808" width="28" height="32" fill="#62b0a0"/><rect x="321" y="812" width="22" height="24" fill="#ffffcc"/><rect x="324.500" y="816.500" width="15" height="15" fill="#ffffcc" stroke="#000"/><path d="M332,818V826M332,828V830" stroke="#000" stroke-width="1.6"/>
<path d="M316.500,808V840M347,808V840" stroke="#333"/>
<text class="mo" x="352" y="827" font-size="11.670" fill="#000">&lt;M1&gt; - Select first area corner</text>
<rect x="1362" y="808" width="78" height="32" fill="#55c8aa"/><path d="M1362,809H1440M1363,808V840" stroke="#1e6a58"/>
<text class="mo" x="1373" y="829" font-size="14.500" fill="#0a2a24">Inch</text>
<path d="M1417,826H1431V821" fill="none" stroke="#e8fff8" stroke-width="2"/><path d="M1417,821H1431" stroke="#2a7868" stroke-width="2"/>
<!-- status -->
<rect x="0" y="840" width="1440" height="33" fill="#3a6a60"/>
<rect x="2" y="843" width="1436" height="29" fill="#b2ffff"/>
<path d="M2,844H1438" stroke="#e8ffff" stroke-width="2"/><path d="M3,871H1438" stroke="#6aa8a8" stroke-width="2"/>
<path d="M3,843V871" stroke="#e8ffff" stroke-width="2"/>
<text class="mo" x="721" y="860" font-size="11.670" fill="#000" text-anchor="middle">to,#4621,Pad,X=0.5725263,Y=3.046847,pb,POS</text>
<rect x="0" y="873" width="1440" height="3" fill="#d8d8d0"/>

<!-- POPVIEW 1 -->
<rect x="247" y="209" width="411" height="508" fill="#cfe5e0"/>
<rect x="250" y="212" width="405" height="502" fill="#808080"/>
<rect x="251" y="213" width="403" height="17" fill="#a8a8a8"/>
<rect x="251" y="230" width="403" height="3" fill="#5a8a7c"/>
<rect x="254" y="217" width="13" height="13" fill="#e8e8d0"/><rect x="254" y="217" width="13" height="3" fill="#1a2a70"/><path d="M256,222L264,228M264,222L256,228" stroke="#b8a000" stroke-width="2"/>
<text class="sa" x="270" y="226" font-size="11" font-weight="700" fill="#dcdcdc">Popview - 1</text>
<rect x="637.500" y="215.500" width="15" height="13" fill="#d4d0c8" stroke="#333"/><path d="M641,218L649,226M649,218L641,226" stroke="#000" stroke-width="1.600"/>
<rect x="251" y="233" width="403" height="480" fill="#55c8aa"/>
<rect x="251" y="233" width="3" height="451" fill="#2f6f60"/>
<rect x="254" y="234" width="363" height="450" fill="#000"/>
<rect x="617" y="233" width="37" height="452" fill="#55c8aa"/><path d="M618,233V684" stroke="#b8e8dc" stroke-width="2"/>
<rect x="617" y="233" width="37" height="246" fill="#000"/>
<g clip-path="url(#c1)">
<path d="M255,236H448V254Q448,258 444,258H433V352Q432,359 426,356Q405,340 383,337H255Z" fill="#0a30ff"/>
<rect x="254" y="241" width="176" height="90" fill="url(#pd1)"/>
<rect x="434" y="245" width="6" height="6" fill="#000"/><rect x="419" y="335" width="6" height="6" fill="#000"/>
<path d="M255,360H385Q418,362 418,398V580Q418,597 432,597H615" fill="none" stroke="#b09020" stroke-width="6"/>
<path d="M255,360H385Q418,362 418,398V580Q418,597 432,597H615" fill="none" stroke="#8a8a7c" stroke-width="1.400"/>
<rect x="469" y="236" width="9" height="43" fill="#0a30ff"/><rect x="544" y="236" width="9" height="43" fill="#0a30ff"/>
<rect x="466" y="590" width="16" height="44" rx="7" fill="#0a30ff"/><rect x="541" y="590" width="16" height="44" rx="7" fill="#0a30ff"/>
<rect x="454" y="279" width="161" height="320" fill="#c09a0c"/>
<rect x="454" y="279" width="38" height="298" fill="#c4c4f6"/><rect x="530" y="279" width="38" height="298" fill="#c4c4f6"/><rect x="606" y="279" width="10" height="298" fill="#c4c4f6"/>
<rect x="466" y="577" width="16" height="21" fill="#c4c4f6"/><rect x="541" y="577" width="16" height="21" fill="#c4c4f6"/>
<rect x="454" y="597" width="161" height="2" fill="#b09020"/>
<rect x="466" y="599" width="16" height="8" fill="#0a30ff"/><rect x="541" y="599" width="16" height="8" fill="#0a30ff"/>
</g>
<g>
<use href="#pb" x="620" y="233"/><use href="#pb" x="620" y="268"/><use href="#pb" x="620" y="303"/><use href="#pb" x="620" y="338"/><use href="#pb" x="620" y="373"/><use href="#pb" x="620" y="408"/><use href="#pb" x="620" y="443"/>
</g>
<g transform="translate(620,233)"><rect x="9" y="12" width="12" height="13" class="ic"/><rect x="19" y="8" width="7" height="7" fill="#9ce2dc" stroke="#000"/><path d="M12,18H18M14,16L11.500,18.500L14,21" stroke="#000" fill="none"/></g>
<g transform="translate(620,268)"><rect x="10" y="15" width="14" height="11" class="ic"/><path d="M17,7L23,13H20V19H14V13H11Z"/></g>
<g transform="translate(620,303)"><rect x="10" y="8" width="14" height="11" class="ic"/><path d="M17,27L23,21H20V14H14V21H11Z"/></g>
<g transform="translate(620,338)"><rect x="13" y="9" width="12" height="15" class="ic"/><path d="M7,17L13,11V14H20V20H13V23Z"/></g>
<g transform="translate(620,373)"><rect x="9" y="9" width="12" height="15" class="ic"/><path d="M27,17L21,11V14H14V20H21V23Z"/></g>
<g transform="translate(620,408)"><rect x="13" y="13" width="8" height="8" class="ic"/><path d="M17,6L23,11H11ZM17,28L23,23H11ZM6,17L11,11V23ZM28,17L23,11V23Z"/></g>
<g transform="translate(620,443)"><rect x="14" y="14" width="6" height="6" class="ic" style="stroke-width:1.400"/><path d="M17,7L21,11H13ZM17,27L21,23H13ZM7,17L11,13V21ZM27,17L23,13V21Z"/></g>
<rect x="251" y="684" width="403" height="3" fill="#2f6f60"/>
<rect x="252" y="686" width="401" height="26" fill="#9ce2dc"/>
<path d="M252,712V686H653" fill="none" stroke="#e0fafa" stroke-width="2"/><path d="M653,686V712H252" fill="none" stroke="#4e8a80" stroke-width="2"/>
<text class="mn" x="452" y="704" font-size="15" text-anchor="middle" fill="#000">Close</text>

<!-- POPVIEW 2 -->
<rect x="830" y="66" width="373" height="458" fill="#d8e4e0"/>
<rect x="833" y="68" width="367" height="453" fill="#55c8aa"/>
<rect x="833" y="68" width="367" height="17" fill="url(#tb2)"/>
<rect x="833" y="85" width="367" height="3" fill="#5a8a7c"/>
<rect x="835" y="70" width="13" height="13" fill="#e8e8d0"/><rect x="835" y="70" width="13" height="3" fill="#1a2a70"/><path d="M837,75L845,81M845,75L837,81" stroke="#b8a000" stroke-width="2"/>
<text class="sa" x="851" y="80" font-size="11" font-weight="700" fill="#fff">Popview - 2</text>
<rect x="1182.500" y="69.500" width="15" height="13" fill="#d4d0c8" stroke="#333"/><path d="M1186,72L1194,80M1194,72L1186,80" stroke="#000" stroke-width="1.600"/>
<rect x="833" y="88" width="3" height="404" fill="#2f6f60"/>
<rect x="835" y="89" width="327" height="402" fill="#000"/>
<rect x="1162" y="88" width="38" height="404" fill="#55c8aa"/><path d="M1163,88V492" stroke="#b8e8dc" stroke-width="2"/>
<rect x="1163" y="85" width="37" height="247" fill="#000"/>
<g clip-path="url(#c2)">
<path d="M868,90H1161V305H1048V195Q1046,170 1022,169H948Q930,170 923,182V145Q918,125 895,122Q875,118 868,108Z" fill="#0a30ff"/>
<rect x="875" y="93" width="278" height="19" fill="url(#pd2)"/>
<rect x="924" y="112" width="229" height="58" fill="url(#pd2)"/>
<rect x="1052" y="170" width="101" height="130" fill="url(#pd2)"/>
<ellipse cx="1165" cy="110" rx="12" ry="22" fill="#000"/><ellipse cx="1170" cy="240" rx="18" ry="28" fill="#000"/>
<path d="M835,328H935V205Q935,183 958,183H1012Q1034,183 1034,205V318H1161" fill="none" stroke="#b09020" stroke-width="4"/>
<path d="M835,328H935V205Q935,183 958,183H1012Q1034,183 1034,205V318H1161" fill="none" stroke="#8a8a7c" stroke-width="1"/>
<rect x="848" y="90" width="8" height="48" fill="#0a30ff"/>
<rect x="847" y="325" width="10" height="27" rx="4" fill="#0a30ff"/><rect x="892" y="325" width="10" height="27" rx="4" fill="#0a30ff"/>
<rect x="837" y="137" width="72" height="193" fill="#c09a0c"/>
<rect x="837" y="137" width="25" height="180" fill="#c4c4f6"/><rect x="885" y="137" width="24" height="180" fill="#c4c4f6"/>
<rect x="846" y="316" width="11" height="13" fill="#c4c4f6"/><rect x="892" y="316" width="10" height="13" fill="#c4c4f6"/>
</g>
<g>
<use href="#pb" x="1165" y="88"/><use href="#pb" x="1165" y="123"/><use href="#pb" x="1165" y="158"/><use href="#pb" x="1165" y="193"/><use href="#pb" x="1165" y="228"/><use href="#pb" x="1165" y="263"/><use href="#pb" x="1165" y="298"/>
</g>
<g transform="translate(1165,88)"><rect x="9" y="12" width="12" height="13" class="ic"/><rect x="19" y="8" width="7" height="7" fill="#9ce2dc" stroke="#000"/><path d="M12,18H18M14,16L11.500,18.500L14,21" stroke="#000" fill="none"/></g>
<g transform="translate(1165,123)"><rect x="10" y="15" width="14" height="11" class="ic"/><path d="M17,7L23,13H20V19H14V13H11Z"/></g>
<g transform="translate(1165,158)"><rect x="10" y="8" width="14" height="11" class="ic"/><path d="M17,27L23,21H20V14H14V21H11Z"/></g>
<g transform="translate(1165,193)"><rect x="13" y="9" width="12" height="15" class="ic"/><path d="M7,17L13,11V14H20V20H13V23Z"/></g>
<g transform="translate(1165,228)"><rect x="9" y="9" width="12" height="15" class="ic"/><path d="M27,17L21,11V14H14V20H21V23Z"/></g>
<g transform="translate(1165,263)"><rect x="13" y="13" width="8" height="8" class="ic"/><path d="M17,6L23,11H11ZM17,28L23,23H11ZM6,17L11,11V23ZM28,17L23,11V23Z"/></g>
<g transform="translate(1165,298)"><rect x="14" y="14" width="6" height="6" class="ic" style="stroke-width:1.400"/><path d="M17,7L21,11H13ZM17,27L21,23H13ZM7,17L11,13V21ZM27,17L23,13V21Z"/></g>
<rect x="833" y="492" width="367" height="2" fill="#2f6f60"/>
<rect x="834" y="495" width="365" height="25" fill="#9ce2dc"/>
<path d="M834,520V495H1199" fill="none" stroke="#e0fafa" stroke-width="2"/><path d="M1199,495V520H834" fill="none" stroke="#4e8a80" stroke-width="2"/>
<text class="mn" x="1015" y="512" font-size="15" text-anchor="middle" fill="#000">Close</text>
</svg>
</body></html>
